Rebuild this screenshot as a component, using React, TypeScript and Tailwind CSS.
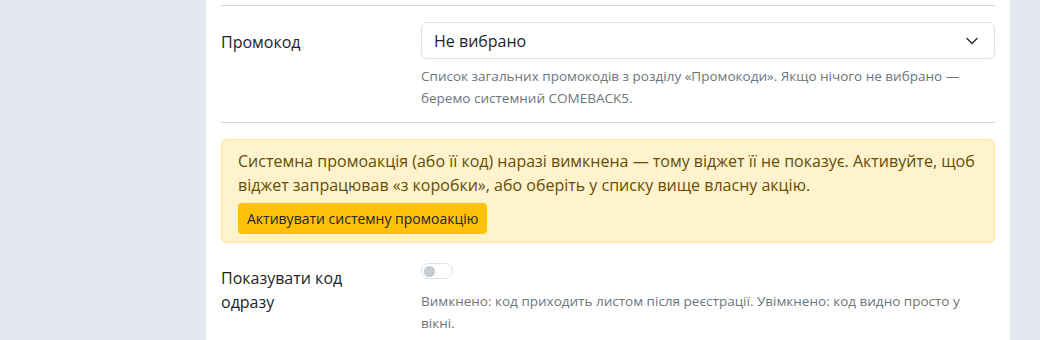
export default function App() {
    return (
        <div className="min-h-[340px] bg-[#e4e7f0] font-['Open_Sans',sans-serif] text-[#212529]">
            <div className="ml-[206px] w-[804px] min-h-[340px] bg-white px-[15px] pt-[5px]">
                {/* ===== PROMO CODE ===== */}
                <div className="border-t border-[#d3d6da] pt-4 pb-[13px] grid grid-cols-[200px_1fr]">
                    <div className="pt-2 text-base leading-6">Промокод</div>
                    <div>
                        <div className="flex h-[37px] items-center justify-between rounded-md border border-[#dee2e6] pl-3 pr-[15px] text-base">
                            <span>Не вибрано</span>
                            <svg width="14" height="10" viewBox="0 0 16 12" fill="none" stroke="#343a40" strokeWidth="2" strokeLinecap="round" strokeLinejoin="round">
                                <path d="m2 3 6 6 6-6" />
                            </svg>
                        </div>
                        <p className="mt-[6px] text-[13.5px] leading-[22px] text-[#6c757d]">
                            Список загальних промокодів з розділу «Промокоди». Якщо нічого не вибрано — беремо системний COMEBACK5.
                        </p>
                    </div>
                </div>

                {/* ===== ALERT ===== */}
                <div className="border-t border-[#d3d6da] pt-4">
                    <div className="rounded-md border border-[#ffe69c] bg-[#fff3cd] px-4 pt-[9px] pb-2 text-[#664d03]">
                        <p className="text-base leading-6">
                            Системна промоакція (або її код) наразі вимкнена — тому віджет її не показує. Активуйте, щоб віджет запрацював «з коробки», або оберіть у списку вище власну акцію.
                        </p>
                        <button className="mt-[6px] h-[31px] rounded bg-[#ffc107] px-[9px] text-sm text-[#212529]">
                            Активувати системну промоакцію
                        </button>
                    </div>
                </div>

                {/* ===== SHOW CODE ===== */}
                <div className="mt-[20px] grid grid-cols-[200px_1fr]">
                    <div className="pt-[3px] text-base leading-6">Показувати код<br />одразу</div>
                    <div>
                        <div className="flex h-4 w-8 items-center rounded-full border border-[#dee2e6] px-[2px]">
                            <span className="h-[11px] w-[11px] rounded-full bg-[#c8cbcf]" />
                        </div>
                        <p className="mt-[11px] text-[13.5px] leading-[22px] text-[#6c757d]">
                            Вимкнено: код приходить листом після реєстрації. Увімкнено: код видно просто у вікні.
                        </p>
                    </div>
                </div>
            </div>
        </div>
    );
}
